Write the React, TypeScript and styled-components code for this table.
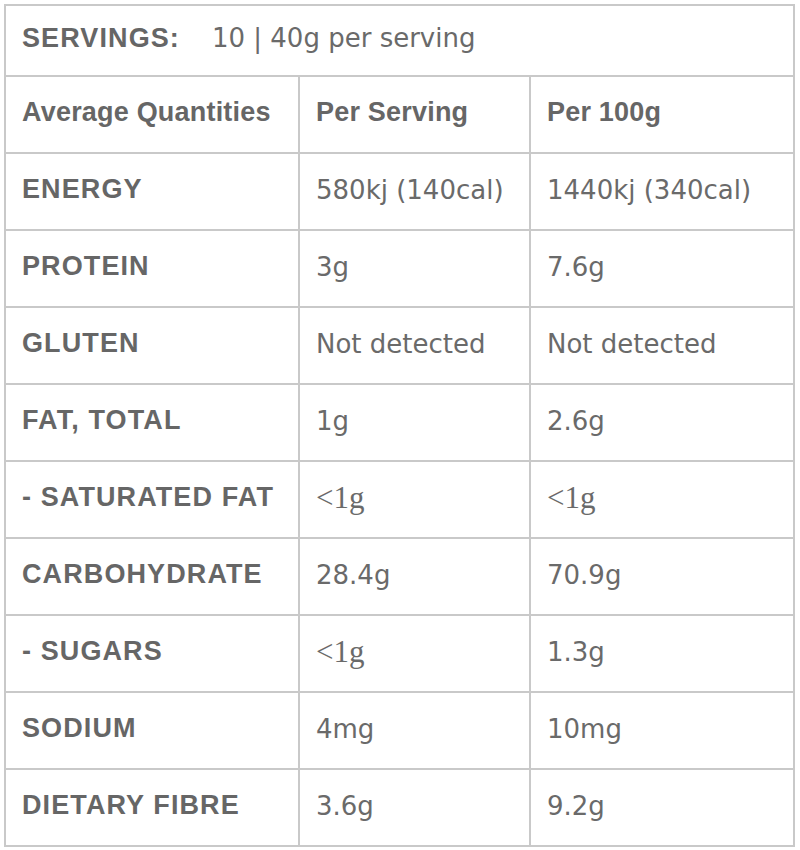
import React from 'react';
import styled, { createGlobalStyle } from 'styled-components';

const GlobalStyle = createGlobalStyle`
  html, body {
    margin: 0;
    padding: 0;
    background: #ffffff;
  }
  body {
    font-family: "Liberation Sans", Arial, sans-serif;
    color: #666666;
  }
`;

const Page = styled.div`
  padding: 4px 5px 4px 4px;
`;

const Table = styled.table`
  width: 791px;
  border-collapse: collapse;
  table-layout: fixed;
  border: 2px solid #c9c9c9;
`;

const Col = styled.col<{ $width?: number }>`
  ${p => (p.$width ? `width: ${p.$width}px;` : '')}
`;

const Row = styled.tr<{ $height: number }>`
  height: ${p => p.$height}px;
`;

const Cell = styled.td`
  border: 2px solid #c9c9c9;
  padding: 0 0 4px 16px;
  vertical-align: middle;
  white-space: nowrap;
  color: #666666;
`;

const LabelCell = styled(Cell)<{ $caps?: boolean }>`
  font-family: "Liberation Sans", Arial, sans-serif;
  font-size: 27px;
  font-weight: 700;
  letter-spacing: ${p => (p.$caps ? '1.1px' : '0.2px')};
`;

const ValueCell = styled(Cell)`
  font-family: "DejaVu Sans", "Liberation Sans", sans-serif;
  font-size: 26px;
  font-weight: 400;
  color: #6a6a6a;
`;

const ServingsLabel = styled.span`
  font-family: "Liberation Sans", Arial, sans-serif;
  font-size: 27px;
  font-weight: 700;
  letter-spacing: 1.1px;
  margin-right: 32px;
`;

const ServingsValue = styled.span`
  font-family: "DejaVu Sans", "Liberation Sans", sans-serif;
  font-size: 26px;
  color: #6a6a6a;
`;

// values starting with "<" fall back to a serif face in the original
const Serif = styled.span`
  font-family: "Liberation Serif", "Times New Roman", serif;
  font-size: 31px;
`;

const rows = [
  { label: 'ENERGY', serving: '580kj (140cal)', per100: '1440kj (340cal)' },
  { label: 'PROTEIN', serving: '3g', per100: '7.6g' },
  { label: 'GLUTEN', serving: 'Not detected', per100: 'Not detected' },
  { label: 'FAT, TOTAL', serving: '1g', per100: '2.6g' },
  { label: '- SATURATED FAT', serving: '<1g', per100: '<1g' },
  { label: 'CARBOHYDRATE', serving: '28.4g', per100: '70.9g' },
  { label: '- SUGARS', serving: '<1g', per100: '1.3g' },
  { label: 'SODIUM', serving: '4mg', per100: '10mg' },
  { label: 'DIETARY FIBRE', serving: '3.6g', per100: '9.2g' },
];

const renderValue = (v: string) => (v.startsWith('<') ? <Serif>{v}</Serif> : v);

const App: React.FC = () => {
  return (
    <>
      <GlobalStyle />
      <Page>
        <Table>
          <colgroup>
            <Col $width={294} />
            <Col $width={231} />
            <Col />
          </colgroup>
          <tbody>
            <Row $height={71}>
              <Cell colSpan={3}>
                <ServingsLabel>SERVINGS:</ServingsLabel>
                <ServingsValue>10 | 40g per serving</ServingsValue>
              </Cell>
            </Row>
            <Row $height={77}>
              <LabelCell>Average Quantities</LabelCell>
              <LabelCell>Per Serving</LabelCell>
              <LabelCell>Per 100g</LabelCell>
            </Row>
            {rows.map(r => (
              <Row key={r.label} $height={77}>
                <LabelCell $caps>{r.label}</LabelCell>
                <ValueCell>{renderValue(r.serving)}</ValueCell>
                <ValueCell>{renderValue(r.per100)}</ValueCell>
              </Row>
            ))}
          </tbody>
        </Table>
      </Page>
    </>
  );
};

export default App;
